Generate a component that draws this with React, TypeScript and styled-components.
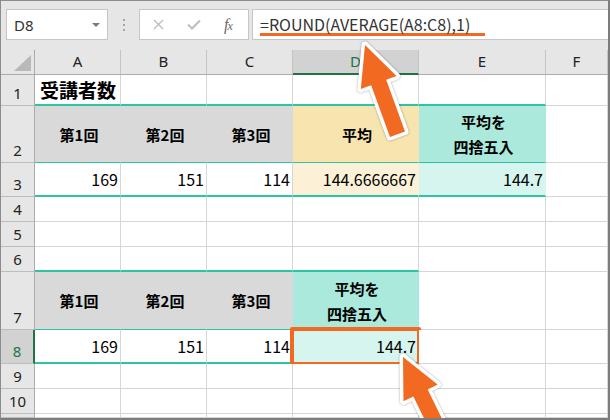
import React from "react";
import styled, { createGlobalStyle } from "styled-components";

const TEAL = "#2ec3a3";
const ORANGE = "#f26a22";
const GRID = "#d6d6d6";
const EXCEL_GREEN = "#217346";

const GlobalStyle = createGlobalStyle`
    html, body {
        margin: 0;
        padding: 0;
        background: #fff;
    }
    body {
        font-family: "Noto Sans CJK JP", "Noto Sans", sans-serif;
    }
    * {
        box-sizing: border-box;
    }
`;

const Frame = styled.div`
    position: relative;
    width: 610px;
    height: 420px;
    border-top: 1px solid #8c8c8c;
    border-left: 1px solid #8c8c8c;
    border-right: 2px solid #7c7c7c;
    border-bottom: 2px solid #7c7c7c;
    background: #e6e6e6;
    display: flex;
    flex-direction: column;
    overflow: hidden;
`;

const FormulaBar = styled.div`
    flex: none;
    height: 49px;
    display: flex;
    align-items: flex-start;
    padding: 8px 0 0 5px;
`;

const NameBox = styled.div`
    width: 102px;
    height: 31px;
    background: #fff;
    border: 1px solid #c6c6c6;
    display: flex;
    align-items: center;
    justify-content: space-between;
    padding: 0 7px 0 7px;
    font-family: "Noto Sans", sans-serif;
    font-size: 15px;
    color: #333;
`;

const Caret = styled.span`
    width: 0;
    height: 0;
    border-left: 4px solid transparent;
    border-right: 4px solid transparent;
    border-top: 4px solid #7a7a7a;
`;

const Separator = styled.div`
    width: 31px;
    height: 31px;
    display: flex;
    flex-direction: column;
    align-items: center;
    justify-content: center;
    gap: 3px;
`;

const Dot = styled.span`
    width: 2px;
    height: 2px;
    background: #a4a4a4;
`;

const FxBox = styled.div`
    width: 110px;
    height: 31px;
    background: #fff;
    border: 1px solid #c6c6c6;
    display: flex;
    align-items: center;
    padding-left: 13px;
    gap: 23px;
`;

const FxLabel = styled.span`
    font-family: "Liberation Serif", serif;
    font-style: italic;
    font-size: 16px;
    color: #6a6a6a;
    letter-spacing: -1px;

    small {
        font-size: 12px;
    }
`;

const FormulaInput = styled.div`
    flex: 1;
    height: 31px;
    margin-left: 3px;
    background: #fff;
    border: 1px solid #c6c6c6;
    border-right: none;
    display: flex;
    align-items: center;
    padding-left: 7px;
`;

const FormulaText = styled.span`
    display: inline-block;
    margin-top: 2px;
    padding-right: 15px;
    font-size: 16px;
    line-height: 18px;
    color: #333;
    border-bottom: 3px solid ${ORANGE};
`;

const Sheet = styled.div`
    flex: 1;
    display: grid;
    grid-template-columns: 34px 86px 86px 86px 126px 127px 1fr;
    grid-template-rows: 25px 31px 57px 34px 25px 25px 25px 58px 34px 25px 25px 1fr;
    background: #fff;
`;

const ColHead = styled.div<{ $selected?: boolean }>`
    display: flex;
    align-items: center;
    justify-content: center;
    padding-bottom: 2px;
    background: ${p => (p.$selected ? "#d2d2d2" : "#e6e6e6")};
    border-right: 1px solid #c4c4c4;
    border-bottom: ${p => (p.$selected ? `2px solid ${EXCEL_GREEN}` : "1px solid #ababab")};
    font-family: "Noto Sans", sans-serif;
    font-size: 15px;
    color: ${p => (p.$selected ? EXCEL_GREEN : "#222")};
`;

const Corner = styled(ColHead)`
    border-right: 1px solid #ababab;
    padding: 0;
`;

const RowHead = styled.div<{ $selected?: boolean }>`
    display: flex;
    align-items: flex-end;
    justify-content: center;
    padding-bottom: 2px;
    background: ${p => (p.$selected ? "#d2d2d2" : "#e6e6e6")};
    border-right: ${p => (p.$selected ? `2px solid ${EXCEL_GREEN}` : "1px solid #ababab")};
    border-bottom: 1px solid #bdbdbd;
    font-family: "Noto Sans", sans-serif;
    font-size: 15px;
    line-height: 20px;
    color: ${p => (p.$selected ? EXCEL_GREEN : "#222")};
`;

const Cell = styled.div<{
    $fill?: string;
    $align?: "left" | "center" | "right";
    $bold?: boolean;
    $size?: number;
    $bottom?: string;
}>`
    position: relative;
    display: flex;
    align-items: center;
    justify-content: ${p =>
        p.$align === "right" ? "flex-end" : p.$align === "center" ? "center" : "flex-start"};
    padding: 0 2px 0 5px;
    background: ${p => p.$fill || "#fff"};
    border-right: 1px solid ${p => p.$fill || GRID};
    border-bottom: ${p => p.$bottom || `1px solid ${GRID}`};
    font-size: ${p => p.$size || 16}px;
    font-weight: ${p => (p.$bold ? 700 : 400)};
    line-height: 25px;
    text-align: center;
    color: #000;
    white-space: nowrap;
`;

const Highlight = styled.div`
    position: absolute;
    top: -3px;
    left: -3px;
    right: -3px;
    bottom: -4px;
    border: 4px solid ${ORANGE};
    border-radius: 2px;
`;

const Overlay = styled.svg`
    position: absolute;
    top: -1px;
    left: -1px;
    pointer-events: none;
    filter: drop-shadow(0 0 1px rgba(0, 0, 0, 0.35));
`;

type Spec = {
    text?: React.ReactNode;
    fill?: string;
    align?: "left" | "center" | "right";
    bold?: boolean;
    size?: number;
    bottom?: string;
    outlined?: boolean;
};

const GRAY_HEAD = "#d9d9d9";
const GOLD_HEAD = "#f8e4ae";
const GOLD_CELL = "#fcf1d7";
const TEAL_HEAD = "#abe9dc";
const TEAL_CELL = "#d6f5ee";

const thick = `2px solid ${TEAL}`;
const thin = `1px solid ${TEAL}`;

const head = (text: React.ReactNode, fill: string): Spec => ({
    text,
    fill,
    align: "center",
    bold: true,
    size: 15,
    bottom: thin,
});

const num = (text: string, fill?: string, outlined?: boolean): Spec => ({
    text,
    fill,
    align: "right",
    bottom: thick,
    outlined,
});

const rounded = (
    <>
        平均を
        <br />
        四捨五入
    </>
);

const columns = ["A", "B", "C", "D", "E", "F"];

// rows 1..10; the sliver of row 11 at the bottom is drawn empty
const rows: Spec[][] = [
    [
        { text: "受講者数", bold: true, size: 19, bottom: thick },
        { bottom: thick },
        { bottom: thick },
        { bottom: thick },
        { bottom: thick },
    ],
    [
        head("第1回", GRAY_HEAD),
        head("第2回", GRAY_HEAD),
        head("第3回", GRAY_HEAD),
        head("平均", GOLD_HEAD),
        head(rounded, TEAL_HEAD),
    ],
    [num("169"), num("151"), num("114"), num("144.6666667", GOLD_CELL), num("144.7", TEAL_CELL)],
    [],
    [],
    [{ bottom: thick }, { bottom: thick }, { bottom: thick }, { bottom: thick }],
    [head("第1回", GRAY_HEAD), head("第2回", GRAY_HEAD), head("第3回", GRAY_HEAD), head(rounded, TEAL_HEAD)],
    [num("169"), num("151"), num("114"), num("144.7", TEAL_CELL, true)],
    [],
    [],
];

const ARROW = "M0 0 L19 40 L8 40 L8 130 L-8 130 L-8 40 L-19 40 Z";

const Arrow: React.FC<{ x: number; y: number; angle: number; length: number }> = ({ x, y, angle, length }) => (
    <path
        d={ARROW.replace(/130/g, String(length))}
        transform={`translate(${x} ${y}) rotate(${angle})`}
        fill={ORANGE}
        stroke="#fff"
        strokeWidth={7}
        strokeLinejoin="round"
        paintOrder="stroke"
    />
);

const CrossIcon = () => (
    <svg width="11" height="11" viewBox="0 0 11 11">
        <path d="M1 1 L10 10 M10 1 L1 10" stroke="#bdbdbd" strokeWidth="1.4" fill="none" />
    </svg>
);

const CheckIcon = () => (
    <svg width="14" height="11" viewBox="0 0 14 11">
        <path d="M1 5.5 L5 9.5 L13 1.5" stroke="#bdbdbd" strokeWidth="2" fill="none" />
    </svg>
);

const CornerMark = () => (
    <svg width="33" height="24" viewBox="0 0 33 24">
        <polygon points="13,21 30,21 30,5" fill="#b9b9b9" />
    </svg>
);

export default function App() {
    return (
        <>
            <GlobalStyle />
            <Frame>
                <FormulaBar>
                    <NameBox>
                        D8
                        <Caret />
                    </NameBox>
                    <Separator>
                        <Dot />
                        <Dot />
                        <Dot />
                    </Separator>
                    <FxBox>
                        <CrossIcon />
                        <CheckIcon />
                        <FxLabel>
                            f<small>x</small>
                        </FxLabel>
                    </FxBox>
                    <FormulaInput>
                        <FormulaText>=ROUND(AVERAGE(A8:C8),1)</FormulaText>
                    </FormulaInput>
                </FormulaBar>
                <Sheet>
                    <Corner>
                        <CornerMark />
                    </Corner>
                    {columns.map(c => (
                        <ColHead key={c} $selected={c === "D"}>
                            {c}
                        </ColHead>
                    ))}
                    {rows.map((cells, r) => (
                        <React.Fragment key={r}>
                            <RowHead $selected={r + 1 === 8}>{r + 1}</RowHead>
                            {columns.map((c, i) => {
                                const s = cells[i] || {};
                                return (
                                    <Cell
                                        key={c}
                                        $fill={s.fill}
                                        $align={s.align}
                                        $bold={s.bold}
                                        $size={s.size}
                                        $bottom={s.bottom}
                                    >
                                        {s.text}
                                        {s.outlined && <Highlight />}
                                    </Cell>
                                );
                            })}
                        </React.Fragment>
                    ))}
                    <RowHead />
                    {columns.map(c => (
                        <Cell key={c} />
                    ))}
                </Sheet>
                <Overlay width="610" height="420" viewBox="0 0 610 420">
                    <Arrow x={365} y={45} angle={-20} length={95} />
                    <Arrow x={403} y={357} angle={-26} length={130} />
                </Overlay>
            </Frame>
        </>
    );
}
